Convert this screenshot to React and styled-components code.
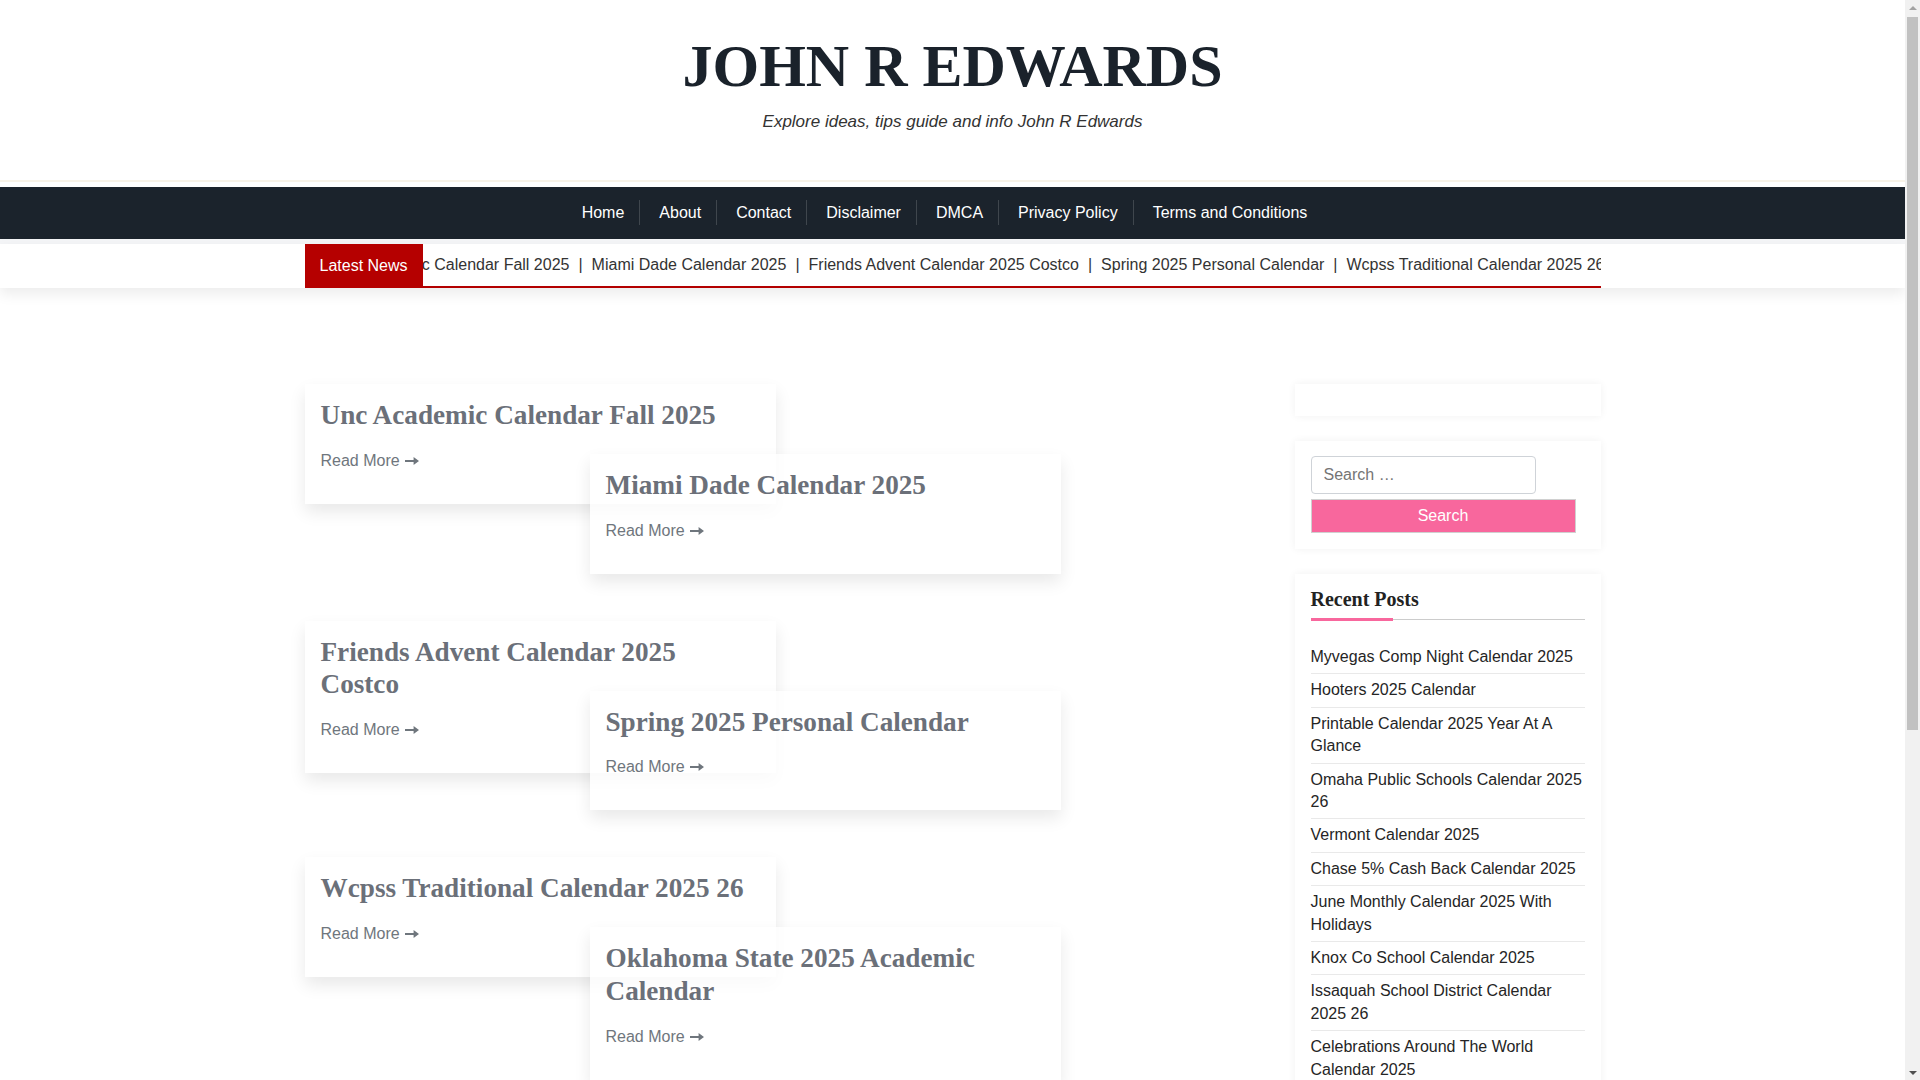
import React from "react";
import styled, { createGlobalStyle } from "styled-components";

const GlobalStyle = createGlobalStyle`
  html, body {
    margin: 0;
    padding: 0;
    background: #fff;
  }
  body {
    font-family: "Liberation Sans", Arial, sans-serif;
    font-size: 16px;
    color: #333;
  }
  * {
    box-sizing: border-box;
  }
  a {
    text-decoration: none;
  }
`;

const menu = [
  "Home",
  "About",
  "Contact",
  "Disclaimer",
  "DMCA",
  "Privacy Policy",
  "Terms and Conditions",
];

const posts = [
  "Unc Academic Calendar Fall 2025",
  "Miami Dade Calendar 2025",
  "Friends Advent Calendar 2025 Costco",
  "Spring 2025 Personal Calendar",
  "Wcpss Traditional Calendar 2025 26",
  "Oklahoma State 2025 Academic Calendar",
];

const recent = [
  "Myvegas Comp Night Calendar 2025",
  "Hooters 2025 Calendar",
  "Printable Calendar 2025 Year At A Glance",
  "Omaha Public Schools Calendar 2025 26",
  "Vermont Calendar 2025",
  "Chase 5% Cash Back Calendar 2025",
  "June Monthly Calendar 2025 With Holidays",
  "Knox Co School Calendar 2025",
  "Issaquah School District Calendar 2025 26",
  "Celebrations Around The World Calendar 2025",
];

const archives = ["June 2025", "May 2025", "April 2025", "March 2025"];

const ArrowIcon = () => (
  <svg width="14" height="8" viewBox="0 0 14 8" aria-hidden="true">
    <path d="M0 2.9h8.6V0L14 4 8.6 8V5.1H0z" fill="currentColor" />
  </svg>
);

const App = () => {
  const pairs = [];
  for (let i = 0; i < posts.length; i += 2) {
    pairs.push([posts[i], posts[i + 1]]);
  }

  return (
    <>
      <GlobalStyle />
      <Page>
        <SiteHeader>
          <SiteTitle>JOHN R EDWARDS</SiteTitle>
          <Tagline>Explore ideas, tips guide and info John R Edwards</Tagline>
        </SiteHeader>

        <NavBar>
          <NavList>
            {menu.map((item, i) => (
              <NavItem key={item} $first={i === 0}>
                <NavLink href="#">{item}</NavLink>
              </NavItem>
            ))}
          </NavList>
        </NavBar>
        <NavGap />

        <TickerBar>
          <Container>
            <TickerInner>
              <TickerLabel>Latest News</TickerLabel>
              <TickerTrack>
                <TickerRow>
                  {posts.map((p, i) => (
                    <React.Fragment key={p}>
                      {i > 0 && <TickerSep>|</TickerSep>}
                      <TickerLink href="#">{p}</TickerLink>
                    </React.Fragment>
                  ))}
                </TickerRow>
              </TickerTrack>
            </TickerInner>
          </Container>
        </TickerBar>

        <Main>
          <Posts>
            {pairs.map(([a, b]) => (
              <Pair key={a}>
                <Card>
                  <CardTitle>{a}</CardTitle>
                  <ReadMore href="#">
                    Read More <ArrowIcon />
                  </ReadMore>
                </Card>
                <Card $shift>
                  <CardTitle>{b}</CardTitle>
                  <ReadMore href="#">
                    Read More <ArrowIcon />
                  </ReadMore>
                </Card>
              </Pair>
            ))}
          </Posts>

          <Sidebar>
            <Widget $empty />
            <Widget>
              <SearchInput type="search" placeholder="Search …" />
              <SearchButton type="button">Search</SearchButton>
            </Widget>
            <Widget $list>
              <WidgetTitle>Recent Posts</WidgetTitle>
              <PostList>
                {recent.map((r) => (
                  <PostItem key={r}>
                    <PostLink href="#">{r}</PostLink>
                  </PostItem>
                ))}
              </PostList>
            </Widget>
            <Widget $list>
              <WidgetTitle>Archives</WidgetTitle>
              <PostList>
                {archives.map((r) => (
                  <PostItem key={r}>
                    <PostLink href="#">{r}</PostLink>
                  </PostItem>
                ))}
              </PostList>
            </Widget>
          </Sidebar>
        </Main>

        <Footer>
          <FooterText>Copyright © 2025 John R Edwards. All rights reserved.</FooterText>
        </Footer>
      </Page>

      {/* window scrollbar, as in the screenshot */}
      <ScrollRail aria-hidden="true">
        <ScrollArrow />
        <ScrollThumb />
        <ScrollArrow $down />
      </ScrollRail>
    </>
  );
};

const Page = styled.div`
  margin-right: 15px;
`;

const ScrollRail = styled.div`
  position: fixed;
  top: 0;
  right: 0;
  width: 15px;
  height: 100vh;
  background: #f1f1f1;
  display: flex;
  flex-direction: column;
  align-items: center;
  z-index: 10;
`;

const ScrollArrow = styled.div`
  height: 15px;
  width: 15px;
  flex: none;
  display: flex;
  align-items: center;
  justify-content: center;
  margin-top: ${(p) => (p.$down ? "auto" : "0")};

  &::before {
    content: "";
    border-left: 4px solid transparent;
    border-right: 4px solid transparent;
    border-bottom: ${(p) => (p.$down ? "0" : "4px solid #a3a3a3")};
    border-top: ${(p) => (p.$down ? "4px solid #505050" : "0")};
  }
`;

const ScrollThumb = styled.div`
  width: 11px;
  height: 713px;
  margin-top: 2px;
  background: #c1c1c1;
`;

const SiteHeader = styled.header`
  text-align: center;
  padding: 30px 0 46px;
  border-bottom: 2px solid #f8f3e8;
`;

const SiteTitle = styled.h1`
  margin: 0;
  font-family: "Liberation Serif", "Times New Roman", serif;
  font-weight: 700;
  font-size: 60px;
  line-height: 72px;
  color: #1a222b;
`;

const Tagline = styled.p`
  margin: 8px 0 0;
  font-style: italic;
  font-size: 17px;
  line-height: 24px;
  color: #333;
`;

const NavBar = styled.nav`
  margin-top: 5px;
  height: 52px;
  padding-bottom: 2px;
  background: #1b232c;
  display: flex;
  justify-content: center;
  align-items: center;
`;

const NavList = styled.ul`
  display: flex;
  align-items: center;
  list-style: none;
  margin: 0;
  padding: 0 20px 0 0;
`;

const NavItem = styled.li`
  padding: 0 15px 0 19px;
  border-left: ${(p) => (p.$first ? "none" : "1px solid rgba(255,255,255,0.16)")};
  line-height: 25px;
`;

const NavLink = styled.a`
  color: #fff;
  font-size: 16px;
`;

const NavGap = styled.div`
  height: 5px;
  background: #f4f5f7;
`;

const TickerBar = styled.div`
  position: relative;
  z-index: 1;
  background: #fff;
  box-shadow: 0 6px 14px rgba(0, 0, 0, 0.08);
`;

const Container = styled.div`
  max-width: 1296px;
  margin: 0 auto;
`;

const TickerInner = styled.div`
  display: flex;
  height: 44px;
`;

const TickerLabel = styled.div`
  display: flex;
  align-items: center;
  padding: 0 15px;
  background: #b50000;
  color: #fff;
  font-size: 16px;
  white-space: nowrap;
`;

const TickerTrack = styled.div`
  flex: 1;
  display: flex;
  align-items: center;
  overflow: hidden;
  border-bottom: 2px solid #b30000;
`;

const TickerRow = styled.div`
  display: flex;
  align-items: center;
  white-space: nowrap;
  margin-left: -95px;
`;

const TickerLink = styled.a`
  color: #333;
  font-size: 16px;
`;

const TickerSep = styled.span`
  padding: 0 9px;
  color: #333;
`;

const Main = styled.main`
  max-width: 1296px;
  margin: 0 auto;
  padding-top: 96px;
  display: grid;
  grid-template-columns: 966px 306px;
  column-gap: 24px;
  align-items: start;
`;

const Posts = styled.div`
  display: flex;
  flex-direction: column;
`;

const Pair = styled.div`
  display: grid;
  grid-template-columns: 285px 186px 285px;
  align-items: start;
  margin-bottom: 47px;
`;

const Card = styled.article`
  grid-row: 1;
  grid-column: ${(p) => (p.$shift ? "2 / 4" : "1 / 3")};
  margin-top: ${(p) => (p.$shift ? "70px" : "0")};
  padding: 15px 16px 31px;
  background: rgba(255, 255, 255, 0.78);
  box-shadow: 0 8px 16px rgba(0, 0, 0, 0.09);
`;

const CardTitle = styled.h2`
  margin: 0 0 17px;
  font-family: "Liberation Serif", "Times New Roman", serif;
  font-weight: 700;
  font-size: 27.2px;
  line-height: 1.2;
  color: #6b7079;
`;

const ReadMore = styled.a`
  display: inline-flex;
  align-items: center;
  gap: 5px;
  font-size: 16px;
  line-height: 24px;
  color: #6f767d;
`;

const Sidebar = styled.aside`
  display: flex;
  flex-direction: column;
  gap: 25px;
`;

const Widget = styled.section`
  background: #fff;
  box-shadow: 0 0 8px rgba(0, 0, 0, 0.06);
  padding: ${(p) => (p.$empty ? "16px" : p.$list ? "13px 16px 10px" : "15px 16px 16px")};
`;

const SearchInput = styled.input`
  display: block;
  width: 225px;
  height: 38px;
  padding: 0 12px;
  border: 1px solid #cfd3d8;
  border-radius: 4px;
  font-family: "Liberation Sans", Arial, sans-serif;
  font-size: 16px;
  color: #333;
  outline: none;
  &::placeholder {
    color: #757575;
  }
`;

const SearchButton = styled.button`
  display: block;
  margin-top: 5px;
  width: 265px;
  height: 34px;
  border: 1px solid #d0d0d0;
  background: #f8679d;
  color: #fff;
  font-family: "Liberation Sans", Arial, sans-serif;
  font-size: 16px;
  cursor: pointer;
`;

const WidgetTitle = styled.h3`
  position: relative;
  margin: 0;
  padding-bottom: 8px;
  border-bottom: 1px solid #cccccc;
  font-family: "Liberation Serif", "Times New Roman", serif;
  font-weight: 700;
  font-size: 20px;
  line-height: 24px;
  color: #222;

  &::after {
    content: "";
    position: absolute;
    left: 0;
    bottom: -2px;
    width: 82px;
    height: 3px;
    background: #f8679d;
  }
`;

const PostList = styled.ul`
  list-style: none;
  margin: 21px 0 0;
  padding: 0;
`;

const PostItem = styled.li`
  padding: 5px 0 5px;
  border-bottom: 1px solid #e9e9e9;
  font-size: 16px;
  line-height: 22.4px;
  &:last-child {
    border-bottom: none;
  }
`;

const PostLink = styled.a`
  color: #252525;
`;

const Footer = styled.footer`
  margin-top: 40px;
  background: #1b232c;
  padding: 40px 0;
  text-align: center;
`;

const FooterText = styled.p`
  margin: 0;
  color: #c9ccd0;
  font-size: 15px;
`;

export default App;
